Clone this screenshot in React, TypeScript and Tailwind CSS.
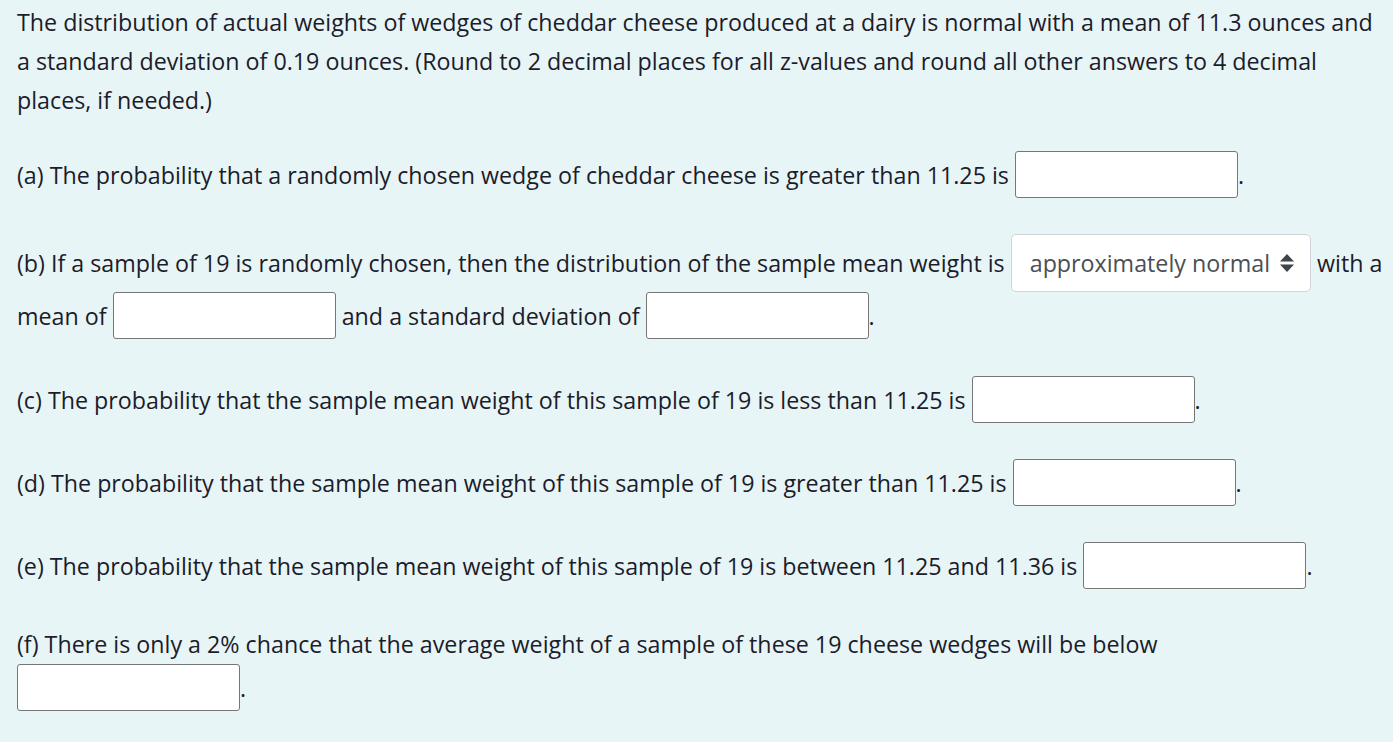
import React from "react"

function Blank() {
  return (
    <input
      type="text"
      className="inline-block w-[223px] h-[47px] align-baseline rounded-[3px] border border-[#767676] bg-white outline-none"
    />
  )
}

function UpDown() {
  return (
    <svg width="14" height="18" viewBox="0 0 14 18" className="inline-block ml-[10px]">
      <path d="M7 0 L14 7.5 L0 7.5 Z" fill="#3f444a" />
      <path d="M7 18 L14 10.5 L0 10.5 Z" fill="#3f444a" />
    </svg>
  )
}

export default function App() {
  return (
    <div className="min-h-screen bg-[#e8f5f7] pl-[17px] pr-[8px] pt-[3px] text-[23.25px] text-[#1c1c2a] font-['Segoe_UI','Open_Sans',sans-serif]">
      <p className="leading-[39px]">
        The distribution of actual weights of wedges of cheddar cheese produced at a dairy is normal with a
        mean of 11.3 ounces and a standard deviation of 0.19 ounces. (Round to 2 decimal places for all
        z-values and round all other answers to 4 decimal places, if needed.)
      </p>

      <p className="mt-[31px] leading-[39px]">
        (a) The probability that a randomly chosen wedge of cheddar cheese is greater than 11.25 is <Blank />.
      </p>

      <p className="mt-[36px] leading-[39px]">
        (b) If a sample of 19 is randomly chosen, then the distribution of the sample mean weight is{" "}
        <span className="inline-flex items-center h-[58px] align-baseline rounded-[5px] border border-[#ced4da] bg-white pl-[18px] pr-[16px] text-[#4a4f55]">
          approximately normal
          <UpDown />
        </span>{" "}
        with a mean of <Blank /> and a standard deviation of <Blank />.
      </p>

      <p className="mt-[37px] leading-[39px]">
        (c) The probability that the sample mean weight of this sample of 19 is less than 11.25 is <Blank />.
      </p>

      <p className="mt-[36px] leading-[39px]">
        (d) The probability that the sample mean weight of this sample of 19 is greater than 11.25 is <Blank />.
      </p>

      <p className="mt-[36px] leading-[39px]">
        (e) The probability that the sample mean weight of this sample of 19 is between 11.25 and 11.36 is{" "}
        <Blank />.
      </p>

      <p className="mt-[36px] leading-[39px]">
        (f) There is only a 2% chance that the average weight of a sample of these 19 cheese wedges will be
        below <Blank />.
      </p>
    </div>
  )
}
